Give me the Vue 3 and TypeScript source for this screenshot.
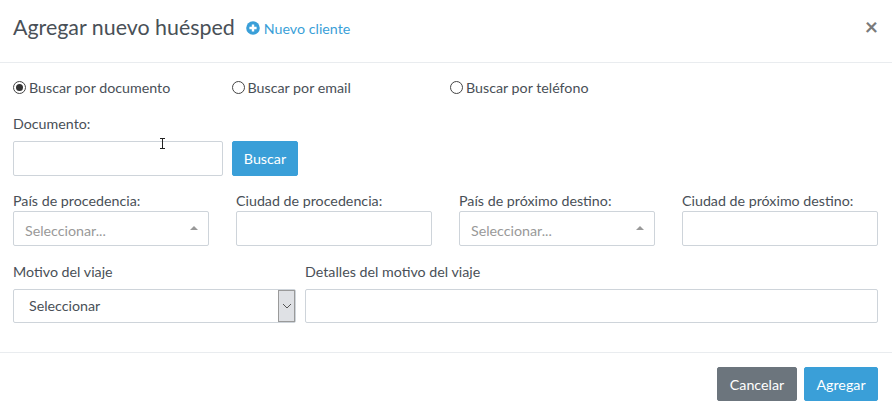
<script setup lang="ts">
const radios = [
  { label: 'Buscar por documento', checked: true },
  { label: 'Buscar por email', checked: false },
  { label: 'Buscar por teléfono', checked: false },
]
const fields = [
  { label: 'País de procedencia:', select: true },
  { label: 'Ciudad de procedencia:', select: false },
  { label: 'País de próximo destino:', select: true },
  { label: 'Ciudad de próximo destino:', select: false },
]
</script>

<template>
  <div class="modal">
    <header class="head">
      <h1 class="title">Agregar nuevo huésped</h1>
      <a class="new">
        <svg class="plus" width="14" height="14" viewBox="0 0 14 14">
          <circle cx="7" cy="7" r="6.800" fill="#3a9fd8" />
          <path d="M7 3.400v7.200M3.400 7h7.200" stroke="#fff" stroke-width="2.400" />
        </svg>
        Nuevo cliente
      </a>
      <span class="close">×</span>
    </header>
    <main class="body">
      <div class="radios">
        <label v-for="r in radios" :key="r.label" class="radio">
          <span class="dot" :class="{ on: r.checked }"></span>{{ r.label }}
        </label>
      </div>
      <div class="doc-label">Documento:</div>
      <div class="doc-row">
        <div class="box doc-input"></div>
        <button class="btn blue search">Buscar</button>
      </div>
      <div class="grid">
        <div v-for="f in fields" :key="f.label" class="field">
          <div class="lab">{{ f.label }}</div>
          <div class="box tall">
            <template v-if="f.select">
              <span class="ph">Seleccionar...</span>
              <span class="caret"></span>
            </template>
          </div>
        </div>
      </div>
      <div class="last">
        <div class="col-a">
          <div class="lab2">Motivo del viaje</div>
          <div class="box native">
            <span class="val">Seleccionar</span>
            <span class="spin">
              <svg width="10" height="6" viewBox="0 0 10 6"><path d="M1 1l4 4 4-4" fill="none" stroke="#555" stroke-width="1" /></svg>
            </span>
          </div>
        </div>
        <div class="col-b">
          <div class="lab2">Detalles del motivo del viaje</div>
          <div class="box native"></div>
        </div>
      </div>
    </main>
    <footer class="foot">
      <button class="btn gray">Cancelar</button>
      <button class="btn blue add">Agregar</button>
    </footer>
    <svg class="cursor" width="7" height="11" viewBox="0 0 7 11">
      <path d="M1 .5h5M1 10.500h5M3.500 .5v10" stroke="#222" stroke-width="1" fill="none" />
    </svg>
  </div>
</template>

<style>
body { margin: 0; background: #fff; }
</style>

<style scoped>
.modal {
  position: relative;
  width: 892px;
  height: 414px;
  overflow: hidden;
  background: #fff;
  font-family: Lato, sans-serif;
  font-size: 14.250px;
  color: #495057;
}
.head {
  box-sizing: border-box;
  border-bottom: 1px solid #e9ecef;
  display: flex;
  align-items: center;
  padding: 0 14px 8px 13px;
  height: 63px;
}
.title {
  margin: 0;
  font-size: 21.400px;
  font-weight: 400;
  line-height: 26px;
}
.new {
  display: flex;
  align-items: center;
  margin: 2px 0 0 11px;
  color: #3a9fd8;
  font-size: 14.250px;
  gap: 4px;
}
.plus { display: block; }
.close {
  margin: 0 0 2px auto;
  font-size: 23px;
  font-weight: 700;
  line-height: 22px;
  color: #7a7a7a;
}
.body { padding: 0 14px 0 13px; height: 289px; box-sizing: border-box; }
.radios { display: flex; padding-top: 16px; height: 18px; }
.radio {
  width: 218.500px;
  display: flex;
  align-items: center;
  line-height: 18px;
  gap: 3px;
  box-sizing: border-box;
}
.dot {
  width: 13px;
  height: 13px;
  box-sizing: border-box;
  border: 1px solid #444;
  border-radius: 50%;
  background: #fff;
  position: relative;
  top: -1px;
}
.dot.on::after {
  content: '';
  position: absolute;
  inset: 2px;
  border-radius: 50%;
  background: #333;
}
.doc-label { margin-top: 18px; line-height: 18px; }
.doc-row { display: flex; gap: 9px; margin-top: 8px; }
.box {
  box-sizing: border-box;
  border: 1px solid #ced4da;
  border-radius: 2px;
  background: #fff;
}
.doc-input { width: 210px; height: 35px; }
.btn {
  font-family: inherit;
  font-size: 14.250px;
  border-radius: 2px;
  color: #fff;
  cursor: default;
}
.blue { background: #3a9fd8; border: 1px solid #3a9fd8; }
.search { width: 66px; height: 35px; padding: 0; }
.grid {
  display: grid;
  grid-template-columns: repeat(4, 196px);
  column-gap: 27px;
  margin-top: 16px;
}
.lab { line-height: 18px; margin-bottom: 1px; }
.tall {
  height: 35px;
  display: flex;
  align-items: center;
  justify-content: space-between;
  padding: 0 11px;
}
.ph { color: #999; position: relative; top: 2px; }
.caret {
  width: 0;
  height: 0;
  border-left: 4px solid transparent;
  border-right: 4px solid transparent;
  border-bottom: 4px solid #999;
  position: relative;
  top: -1px;
  margin-right: -1px;
}
.last { display: flex; gap: 9px; margin-top: 17px; }
.col-a { width: 283px; }
.col-b { width: 573px; }
.lab2 { line-height: 18px; margin-bottom: 8px; }
.native {
  height: 34px;
  display: flex;
  align-items: stretch;
  justify-content: space-between;
}
.val { padding-left: 15px; line-height: 32px; }
.spin {
  width: 17px;
  background: #dfe1e5;
  border: 1px solid #9a9a9a;
  box-sizing: border-box;
  display: flex;
  align-items: center;
  justify-content: center;
}
.foot {
  border-top: 1px solid #e9ecef;
  display: flex;
  justify-content: flex-end;
  gap: 7px;
  padding: 14px 14px 0 0;
}
.foot .btn { height: 34px; padding: 0; }
.gray { width: 80px; background: #6c757d; border: 1px solid #6c757d; }
.add { width: 74px; }
.cursor { position: absolute; left: 159px; top: 138px; }
</style>
